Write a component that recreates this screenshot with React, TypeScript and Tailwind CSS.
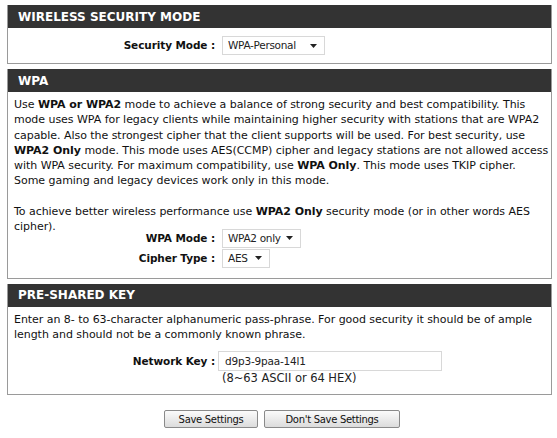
import React from "react";

const font = { fontFamily: '"DejaVu Sans", Verdana, sans-serif' };

function Header({ title }: { title: string }) {
  return (
    <div className="flex h-[23px] items-center bg-[#333333] pl-[10px] text-[12px] font-bold text-white">
      {title}
    </div>
  );
}

function FakeSelect({ value, width }: { value: string; width: string }) {
  return (
    <div
      className={`flex h-[19px] items-center justify-between whitespace-nowrap border border-[#d8d8d8] bg-white pl-[5px] pr-[7px] text-[10.5px] tracking-[-0.3px] text-[#222] ${width}`}
    >
      <span>{value}</span>
      <svg width="7" height="4" viewBox="0 0 7 4" aria-hidden>
        <polygon points="0,0 7,0 3.5,4" fill="#222" />
      </svg>
    </div>
  );
}

function Row({ label, children }: { label: string; children: React.ReactNode }) {
  return (
    <div className="flex items-center">
      <div className="w-[214px] pr-[7px] text-right text-[10.5px] font-bold tracking-[-0.1px] text-[#111]">
        {label}
      </div>
      {children}
    </div>
  );
}

export default function App() {
  return (
    <div className="min-h-[438px] bg-white px-[7px] pt-[5px] text-[#111]" style={font}>
      <div className="w-[545px]">
        <section className="border-x border-b border-[#9a9a9a]">
          <Header title="WIRELESS SECURITY MODE" />
          <div className="flex h-[35px] items-center">
            <Row label="Security Mode :">
              <FakeSelect value="WPA-Personal" width="w-[103px]" />
            </Row>
          </div>
        </section>

        <section className="mt-[5px] border-x border-b border-[#9a9a9a]">
          <Header title="WPA" />
          <div className="px-[6px] pt-[5px] pb-[10px] text-[11px] leading-[15.3px] tracking-[-0.04px]">
            <p className="whitespace-nowrap">
              Use <b>WPA or WPA2</b> mode to achieve a balance of strong security and best compatibility. This
              <br />
              mode uses WPA for legacy clients while maintaining higher security with stations that are WPA2
              <br />
              capable. Also the strongest cipher that the client supports will be used. For best security, use
              <br />
              <b>WPA2 Only</b> mode. This mode uses AES(CCMP) cipher and legacy stations are not allowed access
              <br />
              with WPA security. For maximum compatibility, use <b>WPA Only</b>. This mode uses TKIP cipher.
              <br />
              Some gaming and legacy devices work only in this mode.
            </p>
            <p className="mt-[15.3px] whitespace-nowrap">
              To achieve better wireless performance use <b>WPA2 Only</b> security mode (or in other words AES
              <br />
              cipher).
            </p>
            <div className="-mx-[6px] -mt-[6px] flex flex-col gap-[1px]">
              <Row label="WPA Mode :">
                <FakeSelect value="WPA2 only" width="w-[79px]" />
              </Row>
              <Row label="Cipher Type :">
                <FakeSelect value="AES" width="w-[48px]" />
              </Row>
            </div>
          </div>
        </section>

        <section className="mt-[5px] border-x border-b border-[#9a9a9a]">
          <Header title="PRE-SHARED KEY" />
          <div className="pt-[5px] pb-[8px] text-[11px] leading-[15.3px] tracking-[-0.04px]">
            <p className="whitespace-nowrap px-[6px]">
              Enter an 8- to 63-character alphanumeric pass-phrase. For good security it should be of ample
              <br />
              length and should not be a commonly known phrase.
            </p>
            <div className="mt-[9px]">
              <Row label="Network Key :">
                <div className="-ml-[4px] flex h-[20px] w-[224px] items-center border border-[#d8d8d8] bg-white pl-[6px] text-[10.5px] tracking-[-0.2px] text-[#222]">
                  d9p3-9paa-14l1
                </div>
              </Row>
              <div className="pl-[214px] text-[11.5px] leading-[15px] text-[#222]">(8~63 ASCII or 64 HEX)</div>
            </div>
          </div>
        </section>

        <div className="mt-[15px] flex justify-center gap-[6px] pl-[5px]">
          <button className="h-[18px] w-[94px] rounded-[2px] border border-[#8a8a8a] bg-gradient-to-b from-[#fbfbfb] to-[#dcdcdc] text-[10px] tracking-[-0.3px] text-[#111]">
            Save Settings
          </button>
          <button className="h-[18px] w-[136px] rounded-[2px] border border-[#8a8a8a] bg-gradient-to-b from-[#fbfbfb] to-[#dcdcdc] text-[10px] tracking-[-0.3px] text-[#111]">
            Don't Save Settings
          </button>
        </div>
      </div>
    </div>
  );
}
